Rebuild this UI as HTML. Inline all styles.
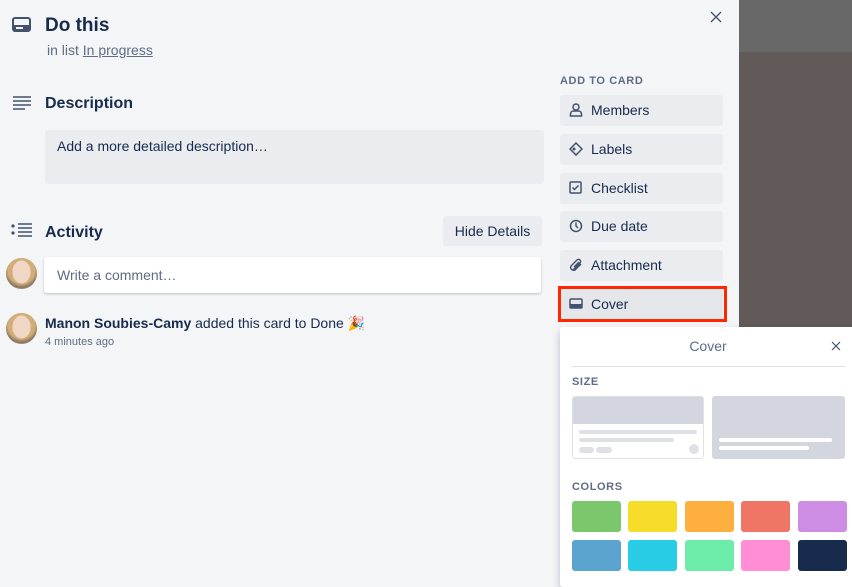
<!DOCTYPE html>
<html><head><style>
*{margin:0;padding:0;box-sizing:border-box}
body{width:852px;height:582px;overflow:hidden;position:relative;font-family:"Liberation Sans",sans-serif;color:#172b4d;background:#f4f5f7}
.a{position:absolute}
.btn{position:absolute;left:560px;width:163px;height:31px;background:#ebecf0;border-radius:3px;font-size:14px;line-height:31px;padding-left:31px}
.btn svg{position:absolute;left:9px;top:8px}
.sw{position:absolute;width:49px;height:31px;border-radius:3px}
.gl{background:#dfe1e6;border-radius:3px;position:absolute}
.av{position:absolute;width:31px;height:31px;border-radius:50%;background:radial-gradient(ellipse 30% 38% at 50% 45%,#f0d6c4 0 95%,transparent 100%),radial-gradient(circle at 50% 40%,#d2ad78 0 55%,#8a7560 70%,#e8e4df 100%)}
</style></head><body>
<div class="a" style="left:739px;top:0;width:113px;height:52px;background:#686868"></div>
<div class="a" style="left:739px;top:52px;width:113px;height:530px;background:#625a58"></div>

<svg class="a" style="left:12px;top:17px" width="20" height="16"><rect x="1" y="1" width="17" height="13" rx="2" fill="none" stroke="#42526e" stroke-width="2"/><rect x="1" y="8" width="17" height="6" fill="#42526e"/><rect x="4" y="10" width="7" height="2" fill="#f4f5f7"/></svg>
<div class="a" style="left:45px;top:15px;font-size:19px;font-weight:bold">Do this</div>
<div class="a" style="left:47px;top:42px;font-size:14px;color:#5e6c84">in list <u>In progress</u></div>
<svg class="a" style="left:710px;top:11px" width="12" height="12"><path d="M1 1L11 11M11 1L1 11" stroke="#42526e" stroke-width="1.3"/></svg>

<svg class="a" style="left:13px;top:96px" width="18" height="14"><path d="M0 1h18M0 5h18M0 9h18M0 13h12" stroke="#42526e" stroke-width="1.6"/></svg>
<div class="a" style="left:45px;top:95px;font-size:16px;font-weight:bold">Description</div>
<div class="a" style="left:45px;top:130px;width:499px;height:54px;background:#ebecf0;border-radius:3px;font-size:14px;padding:8px 12px">Add a more detailed description…</div>

<svg class="a" style="left:11px;top:223px" width="22" height="16"><circle cx="2" cy="3" r="1.6" fill="#42526e"/><circle cx="2" cy="10" r="1.6" fill="#42526e"/><path d="M7 1h14M7 5h14M7 9h14M7 13h14" stroke="#42526e" stroke-width="1.6"/></svg>
<div class="a" style="left:45px;top:224px;font-size:16px;font-weight:bold">Activity</div>
<div class="a" style="left:443px;top:216px;width:99px;height:30px;background:#ebecf0;border-radius:3px;font-size:14px;line-height:30px;text-align:center">Hide Details</div>

<div class="av" style="left:6px;top:258px"></div>
<div class="a" style="left:44px;top:257px;width:497px;height:36px;background:#fff;border-radius:3px;box-shadow:0 1px 2px rgba(9,30,66,.25);font-size:14px;color:#5e6c84;padding:10px 13px">Write a comment…</div>
<div class="av" style="left:6px;top:313px"></div>
<div class="a" style="left:45px;top:315px;font-size:14px"><b>Manon Soubies-Camy</b> added this card to Done 🎉</div>
<div class="a" style="left:45px;top:336px;font-size:11px;color:#5e6c84">4 minutes ago</div>

<div class="a" style="left:560px;top:75px;font-size:11px;font-weight:bold;color:#5e6c84;letter-spacing:.6px">ADD TO CARD</div>
<div class="btn" style="top:95px"><svg width="14" height="14"><circle cx="7" cy="4" r="3" fill="none" stroke="#42526e" stroke-width="1.5"/><path d="M1.5 13v-2a3 3 0 0 1 3-3h5a3 3 0 0 1 3 3v2z" fill="none" stroke="#42526e" stroke-width="1.5"/></svg>Members</div>
<div class="btn" style="top:134px"><svg width="14" height="14"><path d="M7 1l6 6-6 6-6-6z" fill="none" stroke="#42526e" stroke-width="1.5"/><circle cx="5" cy="7" r="1.5" fill="#42526e"/></svg>Labels</div>
<div class="btn" style="top:173px"><svg width="14" height="14"><rect x="1" y="1" width="11" height="11" rx="1" fill="none" stroke="#42526e" stroke-width="1.5"/><path d="M3.5 6.5l2 2 4-4" fill="none" stroke="#42526e" stroke-width="1.5"/></svg>Checklist</div>
<div class="btn" style="top:211px"><svg width="14" height="14"><circle cx="7" cy="7" r="5.5" fill="none" stroke="#42526e" stroke-width="1.5"/><path d="M7 3.5V7l2 2" fill="none" stroke="#42526e" stroke-width="1.5"/></svg>Due date</div>
<div class="btn" style="top:250px"><svg width="14" height="14"><path d="M4 12L11 5a2 2 0 0 0-3-3L2 8a3 3 0 0 0 4 4l6-6M5 9l5-5" fill="none" stroke="#42526e" stroke-width="1.4"/></svg>Attachment</div>
<div class="btn" style="top:289px;background:#e4e6ea"><svg width="14" height="14"><rect x="1" y="2" width="12" height="9" rx="1" fill="none" stroke="#42526e" stroke-width="1.5"/><rect x="1" y="7" width="12" height="4" fill="#42526e"/></svg>Cover</div>
<div class="a" style="left:558px;top:286px;width:169px;height:36px;border:3px solid #ff2600"></div>

<div class="a" style="left:560px;top:327px;width:300px;height:260px;background:#fff;border-radius:3px;box-shadow:0 4px 8px rgba(9,30,66,.25)"></div>
<div class="a" style="left:560px;top:338px;width:296px;text-align:center;font-size:14px;color:#5e6c84">Cover</div>
<svg class="a" style="left:831px;top:341px" width="10" height="10"><path d="M1 1L9 9M9 1L1 9" stroke="#42526e" stroke-width="1.2"/></svg>
<div class="a" style="left:572px;top:366px;width:273px;height:1px;background:#dfe1e6"></div>
<div class="a" style="left:572px;top:376px;font-size:11px;font-weight:bold;color:#5e6c84;letter-spacing:.6px">SIZE</div>
<div class="a" style="left:572px;top:396px;width:132px;height:63px;border:1px solid #dfe1e6;border-radius:3px;overflow:hidden;background:#fff">
 <div style="height:27px;background:#d3d6de"></div>
 <div class="gl" style="left:6px;top:33px;width:118px;height:4px"></div>
 <div class="gl" style="left:6px;top:41px;width:95px;height:4px"></div>
 <div class="gl" style="left:6px;top:50px;width:15px;height:6px"></div>
 <div class="gl" style="left:23px;top:50px;width:16px;height:6px"></div>
 <div class="gl" style="left:116px;top:47px;width:10px;height:10px;border-radius:50%"></div>
</div>
<div class="a" style="left:712px;top:396px;width:133px;height:63px;background:#d3d6de;border-radius:3px">
 <div class="a" style="left:7px;top:42px;width:113px;height:4px;background:#fff;border-radius:2px"></div>
 <div class="a" style="left:7px;top:50px;width:90px;height:4px;background:#fff;border-radius:2px"></div>
</div>
<div class="a" style="left:572px;top:481px;font-size:11px;font-weight:bold;color:#5e6c84;letter-spacing:.6px">COLORS</div>
<div class="sw" style="left:572px;top:501px;background:#7bc86c"></div>
<div class="sw" style="left:628px;top:501px;background:#f5dd29"></div>
<div class="sw" style="left:685px;top:501px;background:#ffaf3f"></div>
<div class="sw" style="left:741px;top:501px;background:#ef7564"></div>
<div class="sw" style="left:798px;top:501px;background:#cd8de5"></div>
<div class="sw" style="left:572px;top:540px;background:#5ba4cf"></div>
<div class="sw" style="left:628px;top:540px;background:#29cce5"></div>
<div class="sw" style="left:685px;top:540px;background:#6deca9"></div>
<div class="sw" style="left:741px;top:540px;background:#ff8ed4"></div>
<div class="sw" style="left:798px;top:540px;background:#172b4d"></div>
</body></html>
